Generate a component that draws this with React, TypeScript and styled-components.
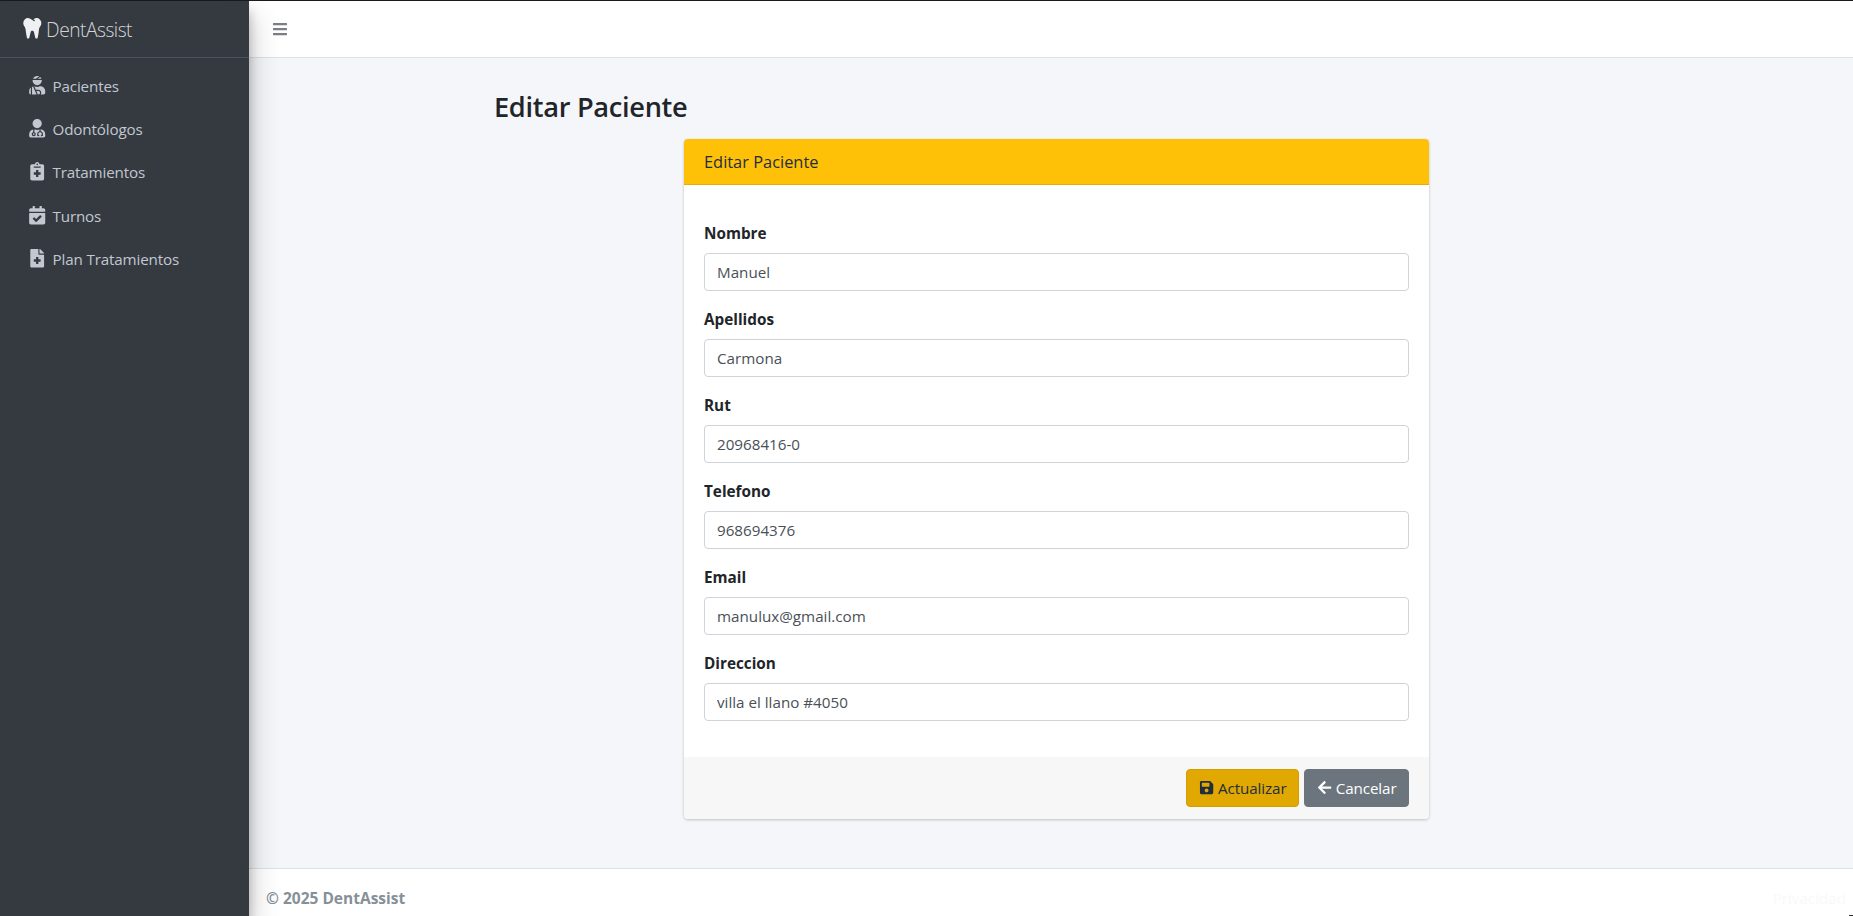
import React from "react";
import styled, { createGlobalStyle } from "styled-components";
import {
  FaArrowLeft,
  FaBars,
  FaCalendarCheck,
  FaFileMedical,
  FaNotesMedical,
  FaSave,
  FaTooth,
  FaUserInjured,
  FaUserMd,
} from "react-icons/fa";

const GlobalStyle = createGlobalStyle`
  html, body { margin: 0; padding: 0; height: 100%; }
  body {
    background: #f4f6f9;
    color: #212529;
    font-family: "Open Sans", "Noto Sans", sans-serif;
    font-size: 16px;
    line-height: 24px;
    overflow: hidden;
  }
  * { box-sizing: border-box; }
`;

const Shell = styled.div`
  display: flex;
  height: 916px;
  border-top: 1px solid #1b1b1b;
`;

const Sidebar = styled.aside`
  width: 249px;
  flex: none;
  background: #343a40;
  box-shadow: 0 14px 28px rgba(0, 0, 0, 0.25), 0 10px 10px rgba(0, 0, 0, 0.22);
  position: relative;
  z-index: 2;
`;

const Brand = styled.div`
  height: 57px;
  border-bottom: 1px solid #4b545c;
  display: flex;
  align-items: center;
  padding: 2px 0 0 22px;
  gap: 3.5px;
  color: rgba(255, 255, 255, 0.8);
  font-size: 19.2px;
  font-weight: 300;
  letter-spacing: -0.5px;
  svg { color: #eef0f2; font-size: 20.6px; margin-top: -3px; }
`;

const NavList = styled.nav`
  display: flex;
  flex-direction: column;
  padding: 6px 8px 0;
`;

const NavItem = styled.a`
  display: flex;
  align-items: center;
  height: 43px;
  padding-left: 16px;
  color: #c2c7d0;
  font-size: 15.2px;
  letter-spacing: -0.15px;
  &:nth-child(3) { margin-bottom: 1px; }
`;

const NavIcon = styled.span`
  width: 28.5px;
  padding-right: 3px;
  display: flex;
  justify-content: center;
  font-size: 18.4px;
`;

const Main = styled.div`
  flex: 1;
  min-width: 0;
  display: flex;
  flex-direction: column;
`;

const Topbar = styled.header`
  height: 57px;
  flex: none;
  background: #fff;
  border-bottom: 1px solid #dee2e6;
  display: flex;
  align-items: center;
  padding-left: 23px;
  color: #7b7f83;
  font-size: 16px;
`;

const Content = styled.main`
  flex: 1;
  padding: 31px 0 0 245px;
`;

const Title = styled.h1`
  margin: 0 0 14px;
  font-size: 27.2px;
  line-height: 36px;
  font-weight: 600;
  letter-spacing: -0.3px;
`;

const Card = styled.section`
  width: 745px;
  margin-left: 190px;
  background: #fff;
  border-radius: 4px;
  overflow: hidden;
  box-shadow: 0 0 1px rgba(0, 0, 0, 0.125), 0 1px 3px rgba(0, 0, 0, 0.2);
`;

const CardHeader = styled.div`
  height: 46px;
  background: #ffc107;
  border-bottom: 1px solid #e5ad06;
  padding: 1px 20px 0;
  display: flex;
  align-items: center;
  color: #1f2d3d;
  font-size: 16.4px;
`;

const CardBody = styled.div`
  padding: 36px 20px 20px;
`;

const Field = styled.div`
  margin-bottom: 16px;
`;

const Label = styled.label`
  display: block;
  margin-bottom: 8px;
  font-size: 15.3px;
  font-weight: 700;
`;

const Input = styled.input`
  display: block;
  width: 100%;
  height: 38px;
  padding: 0 12px;
  border: 1px solid #ced4da;
  border-radius: 4px;
  background: #fff;
  color: #495057;
  font: inherit;
  font-size: 15.2px;
`;

const CardFooter = styled.div`
  height: 62px;
  background: #f7f7f7;
  padding: 0 20px;
  display: flex;
  align-items: center;
  justify-content: flex-end;
  gap: 5px;
`;

const Button = styled.button<{ $tone: "warning" | "secondary" }>`
  height: 38px;
  padding: 0 11.5px;
  border: 1px solid ${(p) => (p.$tone === "warning" ? "#d39e00" : "#6c757d")};
  border-radius: 4px;
  background: ${(p) => (p.$tone === "warning" ? "#e0a800" : "#6c757d")};
  color: ${(p) => (p.$tone === "warning" ? "#1f2d3d" : "#fff")};
  font: inherit;
  font-size: 15.2px;
  letter-spacing: -0.1px;
  display: inline-flex;
  align-items: center;
  gap: 4px;
`;

const Footer = styled.footer`
  height: 48px;
  flex: none;
  position: relative;
  background: #fff;
  border-top: 1px solid #dee2e6;
  padding: 10px 7px 0 17px;
  display: flex;
  align-items: center;
  justify-content: space-between;
  color: #869099;
  font-size: 15.5px;
  font-weight: 700;
  &::after {
    content: "";
    position: absolute;
    right: 0;
    bottom: 0;
    width: 4px;
    height: 1px;
    background: #333;
  }
`;

const Privacy = styled.span`
  color: #f8f9fa;
  font-weight: 400;
  font-size: 15.2px;
`;

const navItems = [
  { icon: <FaUserInjured />, label: "Pacientes" },
  { icon: <FaUserMd />, label: "Odontólogos" },
  { icon: <FaNotesMedical />, label: "Tratamientos" },
  { icon: <FaCalendarCheck />, label: "Turnos" },
  { icon: <FaFileMedical />, label: "Plan Tratamientos" },
];

const fields = [
  { label: "Nombre", value: "Manuel" },
  { label: "Apellidos", value: "Carmona" },
  { label: "Rut", value: "20968416-0" },
  { label: "Telefono", value: "968694376" },
  { label: "Email", value: "manulux@gmail.com" },
  { label: "Direccion", value: "villa el llano #4050" },
];

export default function App() {
  return (
    <>
      <GlobalStyle />
      <Shell>
        <Sidebar>
          <Brand>
            <FaTooth />
            <span>DentAssist</span>
          </Brand>
          <NavList>
            {navItems.map((item) => (
              <NavItem key={item.label}>
                <NavIcon>{item.icon}</NavIcon>
                {item.label}
              </NavItem>
            ))}
          </NavList>
        </Sidebar>
        <Main>
          <Topbar>
            <FaBars />
          </Topbar>
          <Content>
            <Title>Editar Paciente</Title>
            <Card>
              <CardHeader>Editar Paciente</CardHeader>
              <CardBody>
                {fields.map((f) => (
                  <Field key={f.label}>
                    <Label>{f.label}</Label>
                    <Input defaultValue={f.value} />
                  </Field>
                ))}
              </CardBody>
              <CardFooter>
                <Button $tone="warning">
                  <FaSave /> Actualizar
                </Button>
                <Button $tone="secondary">
                  <FaArrowLeft /> Cancelar
                </Button>
              </CardFooter>
            </Card>
          </Content>
          <Footer>
            <span>© 2025 DentAssist</span>
            <Privacy>Privacidad</Privacy>
          </Footer>
        </Main>
      </Shell>
    </>
  );
}
